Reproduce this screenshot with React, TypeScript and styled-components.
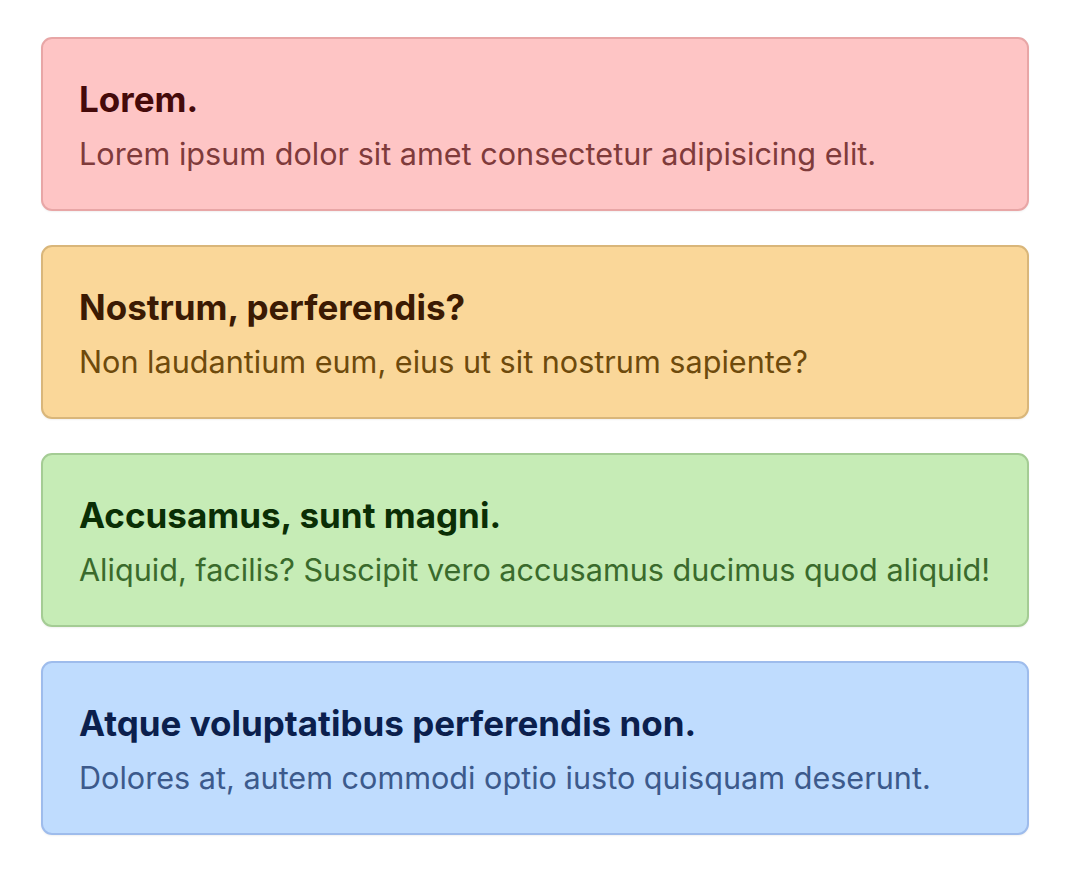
import { FC } from "react";
import styled, { createGlobalStyle } from "styled-components";

type Tone = "red" | "amber" | "green" | "blue";

const palette: Record<Tone, { bg: string; border: string; title: string; text: string }> = {
    red: { bg: "#fec5c5", border: "#e8a6a6", title: "#450a0a", text: "#7f3b3b" },
    amber: { bg: "#fad799", border: "#d9b67a", title: "#3b1a03", text: "#6e4a0c" },
    green: { bg: "#c6ecb6", border: "#a4cc94", title: "#0a2e05", text: "#3a6a2c" },
    blue: { bg: "#bfdcfe", border: "#9ebcec", title: "#0b1f4d", text: "#3c5a8c" },
};

const alerts: { tone: Tone; title: string; text: string }[] = [
    { tone: "red", title: "Lorem.", text: "Lorem ipsum dolor sit amet consectetur adipisicing elit." },
    { tone: "amber", title: "Nostrum, perferendis?", text: "Non laudantium eum, eius ut sit nostrum sapiente?" },
    { tone: "green", title: "Accusamus, sunt magni.", text: "Aliquid, facilis? Suscipit vero accusamus ducimus quod aliquid!" },
    { tone: "blue", title: "Atque voluptatibus perferendis non.", text: "Dolores at, autem commodi optio iusto quisquam deserunt." },
];

const Alert: FC<{ tone: Tone; title: string; text: string }> = ({ tone, title, text }) => (
    <Card $tone={tone}>
        <Title $tone={tone}>{title}</Title>
        <Text $tone={tone}>{text}</Text>
    </Card>
);

export default function App() {
    return (
        <>
            <GlobalStyle />
            <Stack>
                {alerts.map(a => <Alert key={a.title} {...a} />)}
            </Stack>
        </>
    );
}

const GlobalStyle = createGlobalStyle`
    body {
        margin: 0;
        background: #fff;
        font-family: Inter, "Noto Sans", sans-serif;
    }
`;

const Stack = styled.div`
    display: flex;
    flex-direction: column;
    gap: 34px;
    padding: 37px 43px 37px 41px;
`;

const Card = styled.div<{ $tone: Tone }>`
    box-sizing: border-box;
    height: 174px;
    padding: 39px 20px 39px 36px;
    border-radius: 11px;
    border: 2px solid ${p => palette[p.$tone].border};
    background: ${p => palette[p.$tone].bg};
    box-shadow: 0 1px 2px rgba(0, 0, 0, 0.06);
`;

const Title = styled.h2<{ $tone: Tone }>`
    margin: 0 0 14px;
    font-size: 35px;
    font-weight: 700;
    line-height: 42px;
    white-space: nowrap;
    color: ${p => palette[p.$tone].title};
`;

const Text = styled.p<{ $tone: Tone }>`
    margin: 0;
    font-size: 30.6px;
    line-height: 40px;
    white-space: nowrap;
    color: ${p => palette[p.$tone].text};
`;
